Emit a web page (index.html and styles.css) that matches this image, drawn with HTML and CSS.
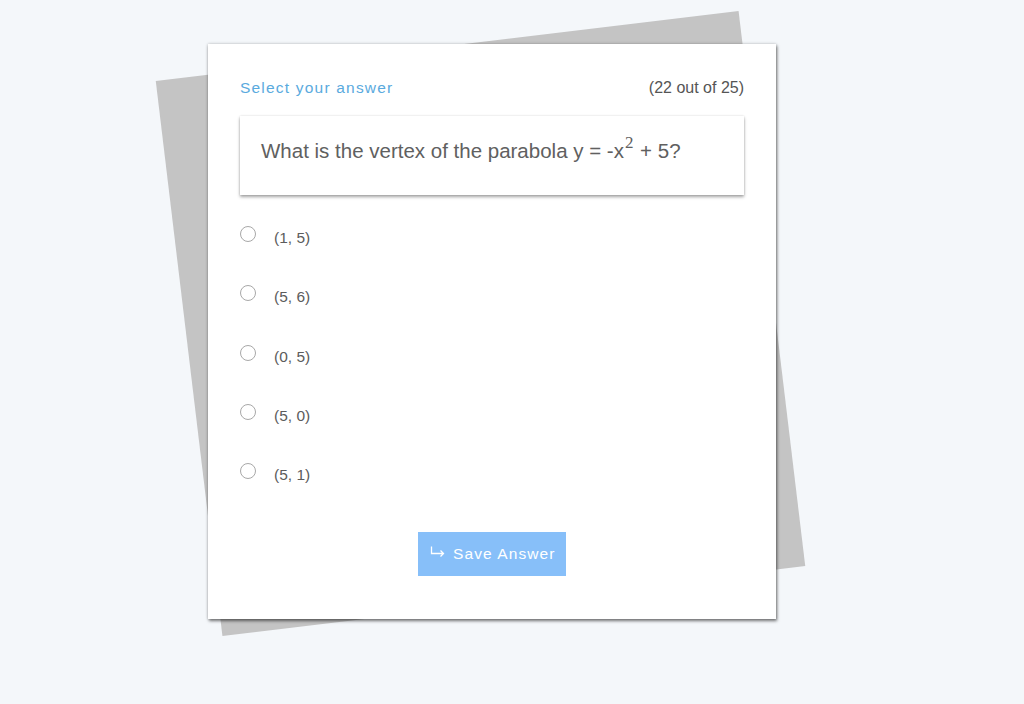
FILE: index.html
```html
<!DOCTYPE html>
<html>
<head>
<meta charset="utf-8">
<link rel="stylesheet" href="styles.css">
</head>
<body>
<div class="stage">
  <div class="sheet"></div>
  <div class="card">
    <div class="head">
      <span class="title">Select your answer</span>
      <span class="count">(22 out of 25)</span>
    </div>
    <div class="question">What is the vertex of the parabola y = -x<sup class="sup">2</sup> + 5?</div>
    <ul class="options">
      <li class="option"><span class="radio"></span><span class="label">(1, 5)</span></li>
      <li class="option"><span class="radio"></span><span class="label">(5, 6)</span></li>
      <li class="option"><span class="radio"></span><span class="label">(0, 5)</span></li>
      <li class="option"><span class="radio"></span><span class="label">(5, 0)</span></li>
      <li class="option"><span class="radio"></span><span class="label">(5, 1)</span></li>
    </ul>
    <div class="actions">
      <button class="save">
        <svg class="arrow" width="15" height="11" viewBox="0 0 15 11"><path d="M1.5 0.5V7.5H13.5M10.5 4.5L13.5 7.5L10.5 10.5" fill="none" stroke="#fff" stroke-width="1.3"/></svg>
        <span>Save Answer</span>
      </button>
    </div>
  </div>
</div>
</body>
</html>
```

FILE: styles.css
```css
html, body {
  margin: 0;
  padding: 0;
  background: #f4f7fa;
  font-family: "Liberation Sans", Arial, sans-serif;
  color: #555;
}
body {
  min-height: 704px;
  padding-bottom: 1px;
  box-sizing: border-box;
}
.stage {
  position: relative;
  width: 568px;
  margin: 44px 0 0 208px;
}
.sheet {
  position: absolute;
  left: -21.5px;
  top: 0;
  width: 587px;
  height: 559px;
  background: #c4c4c4;
  transform: rotate(-6.85deg);
}
.card {
  position: relative;
  background: #fff;
  padding: 35px 32px 43px 32px;
  box-shadow: 0 0 3px rgba(0,0,0,0.22), 1px 2px 3px rgba(0,0,0,0.5);
}
.head {
  display: flex;
  justify-content: space-between;
  align-items: baseline;
  line-height: 18px;
  font-size: 16px;
}
.title {
  color: #5aaade;
  font-size: 15.5px;
  letter-spacing: 1.2px;
}
.count {
  color: #555;
}
.question {
  margin-top: 19px;
  height: 79px;
  box-sizing: border-box;
  padding: 22px 20px 0 21px;
  font-size: 20.5px;
  line-height: 26px;
  color: #606060;
  background: #fff;
  box-shadow: 0 0 2px rgba(0,0,0,0.12), 0 2px 3px rgba(0,0,0,0.35);
}
.sup {
  font-family: "Liberation Serif", "Times New Roman", serif;
  font-size: 17px;
  line-height: 0;
  vertical-align: 10px;
  margin-left: 1px;
  margin-right: 1px;
}
.options {
  list-style: none;
  margin: 31px 0 0 0;
  padding: 0;
  display: flex;
  flex-direction: column;
  gap: 43.3px;
}
.option {
  display: flex;
  align-items: flex-start;
  height: 16px;
}
.radio {
  width: 16px;
  height: 16px;
  box-sizing: border-box;
  border: 1px solid #a8a8a8;
  border-radius: 50%;
  background: #fff;
  flex: none;
}
.label {
  margin-left: 18px;
  margin-top: 3px;
  font-size: 15.5px;
  line-height: 18px;
  color: #5c5c5c;
}
.actions {
  margin-top: 53px;
  display: flex;
  justify-content: center;
}
.save {
  display: flex;
  align-items: center;
  gap: 8px;
  height: 44px;
  width: 148px;
  box-sizing: border-box;
  padding: 0 0 0 12px;
  border: none;
  background: #87bff9;
  color: #fff;
  font-family: "Liberation Sans", Arial, sans-serif;
  font-size: 15.5px;
  letter-spacing: 1.1px;
}
.arrow {
  margin-top: -5px;
  flex: none;
}
```
